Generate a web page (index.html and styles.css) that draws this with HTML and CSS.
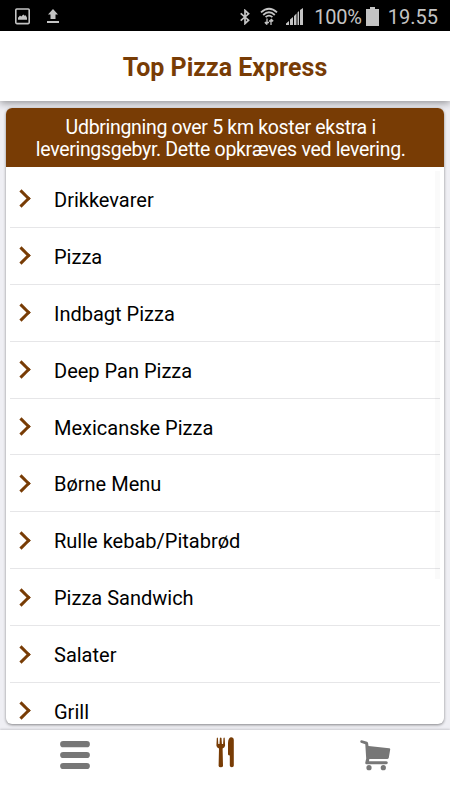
FILE: index.html
```
<!DOCTYPE html>
<html lang="da">
  <head>
    <meta charset="UTF-8" />
    <meta name="viewport" content="width=device-width, initial-scale=1.0" />
    <title>Top Pizza Express</title>
    <link rel="stylesheet" href="styles.css">
  </head>
  <body>
    <div class="status-bar">
      <div class="status-left">
        <svg width="15" height="17" viewBox="0 0 15 17">
          <rect x="0.8" y="1" width="13.4" height="14.6" rx="1" fill="none" stroke="#c4c4c4" stroke-width="1.6" />
          <path d="M3 11.8V9.8L5 7.5l1.3 1 2-2 1.4 1.3 1-.6L12 9.8v2z" fill="#c4c4c4" />
        </svg>
        <svg class="upload" width="12" height="15" viewBox="0 0 12 15">
          <path d="M6 0l5 5.5H8.500V10h-5V5.500H1zM0 12h12v2H0z" fill="#c4c4c4" />
        </svg>
      </div>
      <div class="status-right">
        <svg class="bluetooth" width="10" height="16" viewBox="0 0 10 16">
          <path d="M.7 4.300L8.600 11.200 5 14.600V1.400l3.600 3.400L.7 11.700" fill="none" stroke="#c4c4c4" stroke-width="1.700" />
        </svg>
        <svg class="wifi" width="18" height="19" viewBox="0 0 18 19">
          <path d="M1 5.400Q9-2 17 5.400M3.200 8Q9 2.600 14.800 8M5.600 10.200Q9 7 12.400 10.200" fill="none" stroke="#c4c4c4" stroke-width="1.800" />
          <path d="M7 11.500v6M4.800 15.200L7 17.600M11 18v-6M13.200 14.300L11 12M5 15.500h4M9 14h4" fill="none" stroke="#c4c4c4" stroke-width="1.300" />
        </svg>
        <svg class="signal" width="17" height="17" viewBox="0 0 17 17">
          <path d="M0 17v-1.500L3 13v4zM4 17v-5.500L7 9v8zM8 17V8l2.500-2.500V17zM11.500 17V4.500L13 3v14zM14 17V2l3-2v17z" fill="#c4c4c4" />
        </svg>
        <span class="percent">100%</span>
        <svg class="battery" width="13" height="19" viewBox="0 0 13 19">
          <path d="M4 0h5v2h4v17H0V2h4z" fill="#c4c4c4" />
        </svg>
        <span class="time">19.55</span>
      </div>
    </div>

    <header class="header">
      <h1>Top Pizza Express</h1>
    </header>

    <main class="content">
      <div class="card">
        <div class="notice">Udbringning over 5 km koster ekstra i<br />leveringsgebyr. Dette opkræves ved levering.</div>
        <ul class="menu">
          <li>Drikkevarer</li>
          <li>Pizza</li>
          <li>Indbagt Pizza</li>
          <li>Deep Pan Pizza</li>
          <li>Mexicanske Pizza</li>
          <li>Børne Menu</li>
          <li>Rulle kebab/Pitabrød</li>
          <li>Pizza Sandwich</li>
          <li>Salater</li>
          <li>Grill</li>
        </ul>
        <div class="scrollbar"></div>
      </div>
    </main>

    <nav class="tab-bar">
      <a class="tab">
        <svg width="30" height="30" viewBox="0 0 30 30">
          <path d="M3.200 4.200h23.600M3.200 15h23.600M3.200 26h23.600" stroke="#777" stroke-width="6.200" stroke-linecap="round" />
        </svg>
      </a>
      <a class="tab active">
        <svg width="20" height="31" viewBox="0 0 20 31">
          <path d="M.8 1Q1.300 0 1.900 1L2.300 7h1.200L3.900 1Q4.700 0 5.500 1l.4 6h1.200L7.500 1Q8.200 0 8.700 1l.4 7.500Q9 10.500 6.600 11.500L7 29q-.2 1.300-2.200 1.300T2.600 29L3 11.500Q.4 10.500.4 8.500z" />
          <path d="M12 17.500V6Q12.200.3 15.500.3q2.300 0 2.300 2.500V28.500q0 1.800-2 1.800t-2-1.800V18.500Q12.500 18.500 12 17.500z" />
        </svg>
      </a>
      <a class="tab cart">
        <svg width="31" height="31" viewBox="0 0 31 31">
          <path d="M.3 1.300Q.5 0 1.800.2L7 1.800Q7.900 2.200 8.100 3.200L8.500 6l20.700 2.200q1.200.2 1 1.400l-1.400 8.200q-.2 1-1.300 1.100H9.300L9 21.300h17.300q1.500.1 1.500 1.500t-1.500 1.500H6.500q-1.400-.1-1.200-1.700l.9-4L5.300 4.200.9 2.700Q.2 2.300.3 1.300z" />
          <circle cx="9" cy="27.700" r="2.600" />
          <circle cx="23.300" cy="27.700" r="2.600" />
        </svg>
      </a>
    </nav>
  </body>
</html>
```

FILE: styles.css
```
* {
  box-sizing: border-box;
}
body {
  margin: 0;
  height: 800px;
  display: flex;
  flex-direction: column;
  overflow: hidden;
  background-color: #efeff4;
  font-family: Roboto, sans-serif;
  color: #000;
}
svg {
  display: block;
  flex: none;
}
.status-bar {
  flex: none;
  height: 31px;
  padding: 2px 12px 0 15px;
  display: flex;
  justify-content: space-between;
  align-items: center;
  background-color: #000;
  color: #c4c4c4;
  font-size: 20px;
}
.status-left,
.status-right {
  display: flex;
  align-items: center;
}
.upload {
  margin-left: 17px;
}
.wifi {
  margin-left: 10px;
}
.signal {
  margin-left: 8px;
}
.percent {
  margin-left: 11px;
  letter-spacing: -0.2px;
}
.battery {
  margin: 0 9px 1px 4px;
}
.header {
  position: relative;
  flex: none;
  height: 70px;
  padding-top: 3px;
  display: flex;
  align-items: center;
  justify-content: center;
  background-color: #fff;
  box-shadow: 0 2px 8px rgba(0, 0, 0, 0.4);
}
h1 {
  margin: 0;
  font-size: 25px;
  font-weight: 700;
  color: #783c05;
}
.content {
  flex: 1;
  min-height: 0;
  padding: 7px 6.500px 5px 6px;
}
.card {
  position: relative;
  height: 616px;
  overflow: hidden;
  border-radius: 6px;
  background-color: #fff;
  box-shadow: 0 1px 3px rgba(0, 0, 0, 0.45);
}
.notice {
  height: 59px;
  padding: 9px 8px 0 0;
  background-color: #783c05;
  color: #fff;
  font-size: 19.5px;
  letter-spacing: -0.31px;
  line-height: 21.5px;
  text-align: center;
  white-space: nowrap;
}
.menu {
  list-style: none;
  margin: 4px 3.500px 0 4px;
  padding: 0;
}
.menu li {
  height: 56.9px;
  padding: 2px 0 0 6px;
  display: flex;
  align-items: center;
  border-bottom: 1px solid #e6e6e8;
  font-size: 20px;
}
.menu li::before {
  content: "";
  width: 10px;
  height: 10px;
  margin: -2px 26px 0 -1px;
  border: solid #783c05;
  border-width: 3px 3px 0 0;
  transform: rotate(45deg);
}
/* faded scroll indicator over the list */
.scrollbar {
  position: absolute;
  top: 63px;
  right: 3.500px;
  width: 5px;
  height: 408px;
  background-color: rgba(0, 0, 0, 0.02);
}
.tab-bar {
  flex: none;
  height: 70px;
  display: flex;
  background-color: #fff;
  box-shadow: 0 -1px 2px rgba(0, 0, 0, 0.15);
}
.tab {
  flex: 1;
  display: flex;
  justify-content: center;
  padding-top: 10px;
  fill: #777;
}
.active {
  padding: 7px 0 0 2px;
  fill: #783c05;
}
```
